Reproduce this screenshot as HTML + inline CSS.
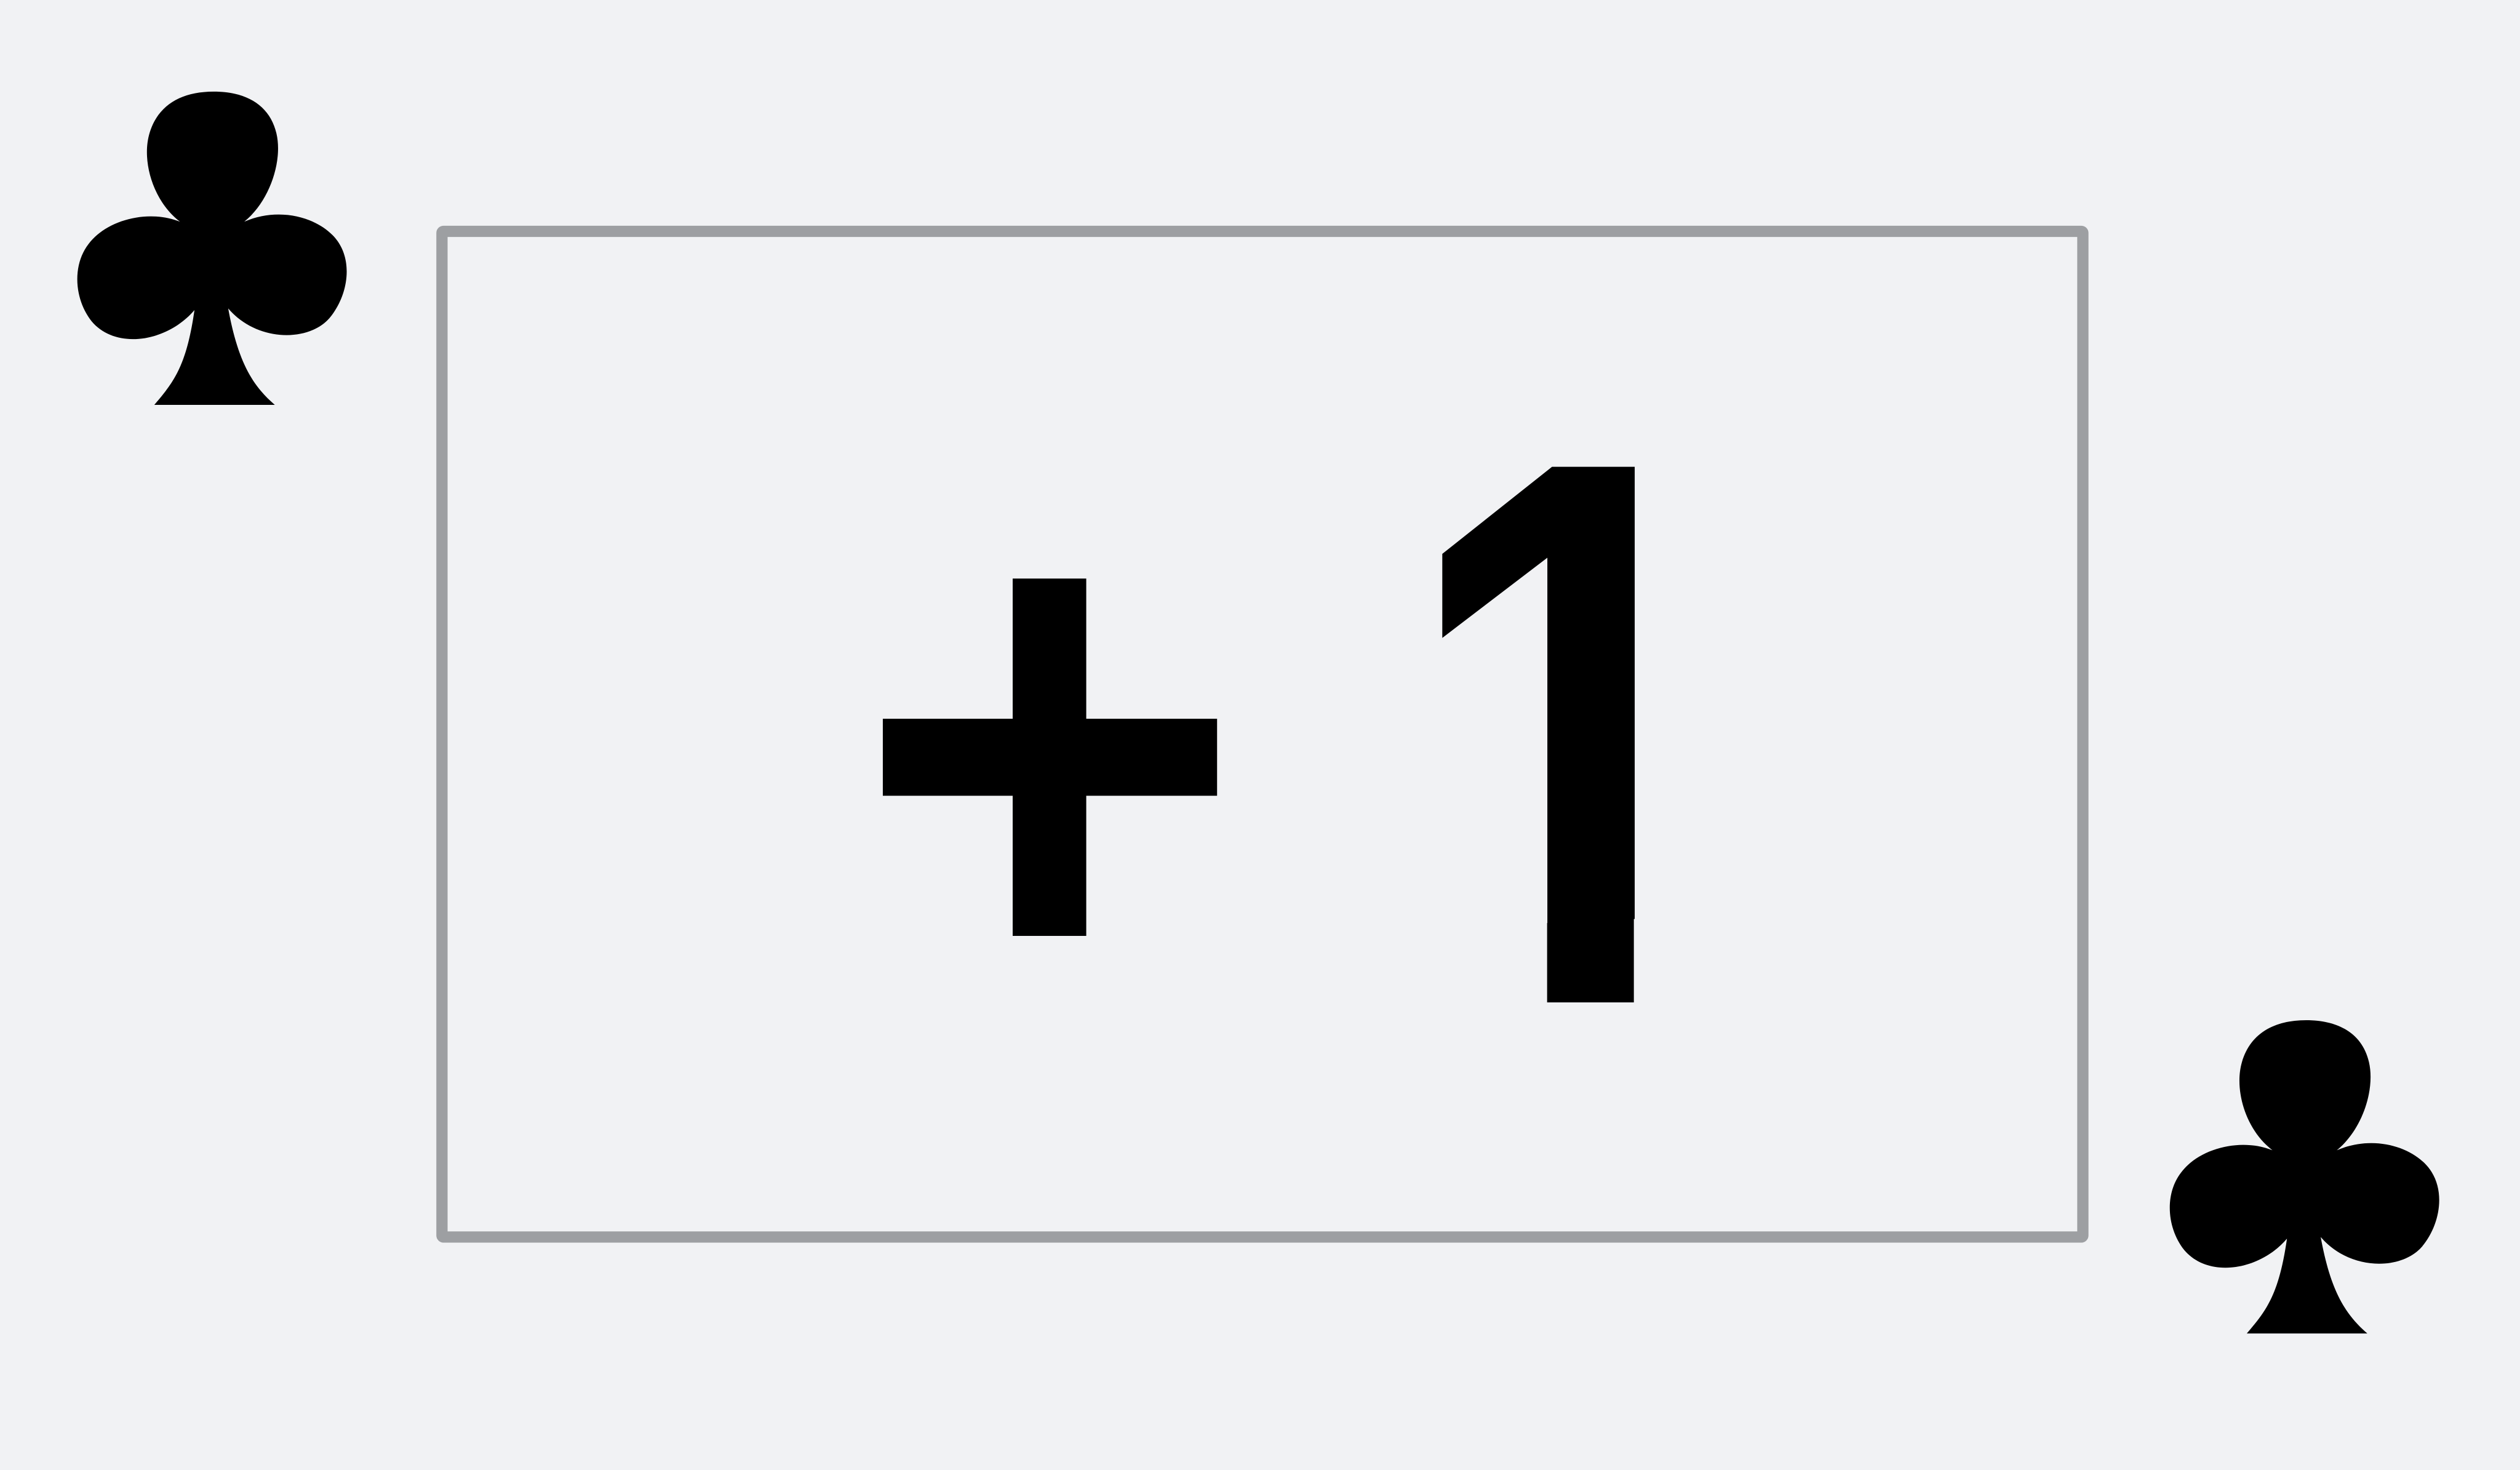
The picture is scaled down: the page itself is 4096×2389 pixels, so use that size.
<!DOCTYPE html>
<html><head><meta charset="utf-8"><style>
html,body{margin:0;padding:0;background:#f1f2f4;}
svg{display:block;}
.t{font-family:"Liberation Sans",Arial,sans-serif;font-weight:bold;}
</style></head><body>
<svg width="4096" height="2389" viewBox="0 0 1568 915" preserveAspectRatio="none" xmlns="http://www.w3.org/2000/svg">
<rect width="1568" height="915" fill="#f1f2f4"/>
<rect x="275" y="144" width="1021" height="626" rx="1" fill="none" stroke="#9d9fa2" stroke-width="7"/>
<defs>
<path id="club" d="M112,138 C95,125 88,100 93,83 C98,66 112,57 133,57 C154,57 168,66 172,83 C176,100 168,125 152,138 C175,128 200,136 210,150 C220,164 216,185 205,198 C192,213 160,213 142,192 C148,225 157,240 171,252 L96,252 C108,238 116,228 121,193 C104,213 72,218 57,200 C46,186 45,165 55,152 C66,137 92,130 112,138 Z"/>
<clipPath id="nofoot" clipPathUnits="userSpaceOnUse">
<rect x="-300" y="-500" width="600" height="450"/>
<rect x="-21" y="-70" width="63.5" height="70"/>
</clipPath>
</defs>
<use href="#club" fill="#000"/>
<use href="#club" fill="#000" transform="translate(1302,578)"/>
<g transform="translate(653,617) scale(0.89,0.94)">
<text class="t" x="0" y="0" font-size="466" text-anchor="middle" fill="#000">+</text>
</g>
<g transform="translate(980.5,624) scale(0.85,1.04)">
<text class="t" x="0" y="0" font-size="466" text-anchor="middle" fill="#000" clip-path="url(#nofoot)">1</text>
</g>
</svg>
</body></html>
